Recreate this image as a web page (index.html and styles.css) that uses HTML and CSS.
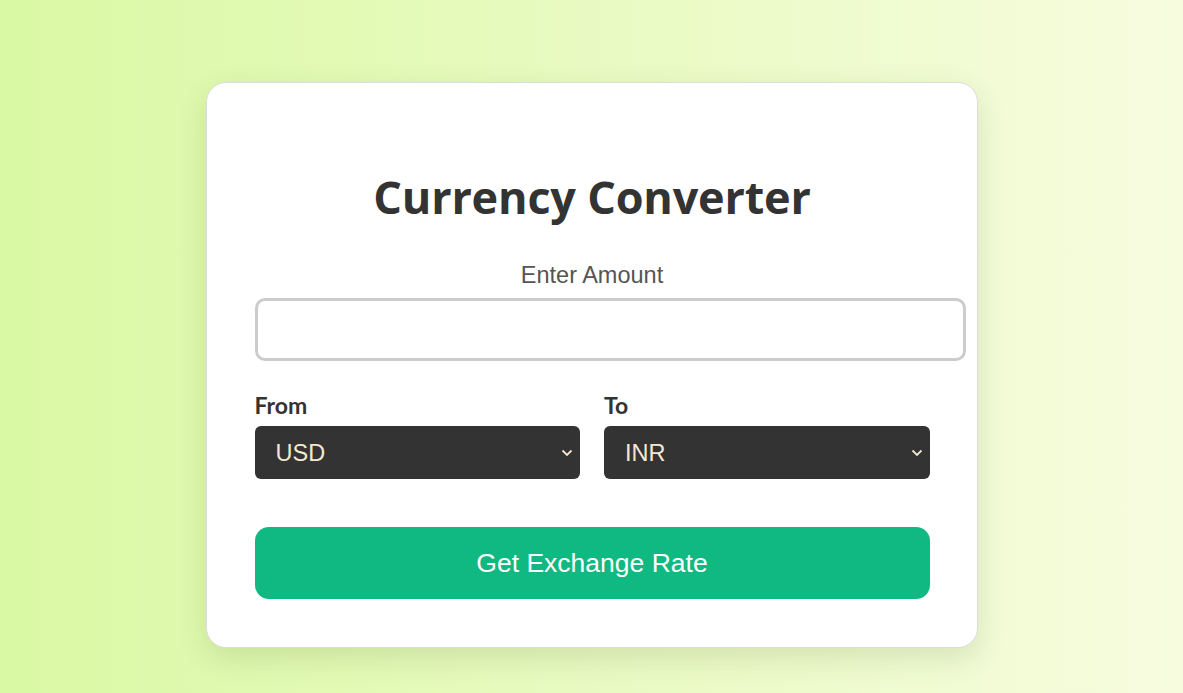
FILE: index.html
```html
<!DOCTYPE html>
<html lang="en">
<head>
<meta charset="utf-8">
<title>Currency Converter</title>
<link rel="stylesheet" href="styles.css">
</head>
<body>
  <main class="card">
    <h1 class="title">Currency Converter</h1>
    <label class="amount-label" for="amount">Enter Amount</label>
    <input class="amount-input" id="amount" type="text">
    <div class="pair">
      <div class="field">
        <label class="field-label" for="from">From</label>
        <div class="select-wrap">
          <select class="currency" id="from">
            <option>USD</option>
          </select>
          <svg class="chev" width="12" height="8" viewBox="0 0 12 8"><path d="M1.5 1.5 L6 6 L10.5 1.5" fill="none" stroke="#f3e6cc" stroke-width="1.8"/></svg>
        </div>
      </div>
      <div class="field">
        <label class="field-label" for="to">To</label>
        <div class="select-wrap">
          <select class="currency" id="to">
            <option>INR</option>
          </select>
          <svg class="chev" width="12" height="8" viewBox="0 0 12 8"><path d="M1.5 1.5 L6 6 L10.5 1.5" fill="none" stroke="#f3e6cc" stroke-width="1.8"/></svg>
        </div>
      </div>
    </div>
    <button class="convert" type="button">Get Exchange Rate</button>
  </main>
</body>
</html>
```

FILE: styles.css
```css
* { box-sizing: border-box; }

html, body { height: 100%; }

body {
  margin: 0;
  padding-top: 82px;
  background: linear-gradient(to right, #daf9a4, #f7fcdf);
  font-family: "Liberation Sans", Arial, sans-serif;
}

.card {
  width: 772px;
  margin: 0 auto;
  background: #fff;
  border: 1px solid #dcdcdc;
  border-radius: 20px;
  padding: 47px 47px 48px 48px;
  box-shadow: 0 10px 30px rgba(60, 80, 20, 0.14);
  display: flex;
  flex-direction: column;
}

.title {
  margin: 38px 0 0;
  font-family: "Open Sans", "Noto Sans", sans-serif;
  font-weight: 700;
  font-size: 45px;
  line-height: 58px;
  color: #333;
  text-align: center;
  letter-spacing: -0.2px;
}

.amount-label {
  margin-top: 35px;
  font-size: 23.5px;
  line-height: 28px;
  color: #555;
  text-align: center;
}

.amount-input {
  box-sizing: content-box;
  width: 100%;
  height: 57px;
  margin: 9px 0 0;
  padding: 0 15px;
  border: 3px solid #cccccc;
  border-radius: 10px;
  font-size: 22px;
  font-family: inherit;
  outline: none;
  background: #fff;
}

.pair {
  margin-top: 30px;
  display: grid;
  grid-template-columns: 1fr 1fr;
  column-gap: 24px;
}

.field {
  display: flex;
  flex-direction: column;
}

.field-label {
  font-family: Lato, "Open Sans", sans-serif;
  font-weight: 700;
  font-size: 23px;
  line-height: 28px;
  color: #333;
}

.select-wrap {
  position: relative;
  margin-top: 7px;
}

.currency {
  -webkit-appearance: none;
  appearance: none;
  width: 100%;
  height: 53px;
  padding: 0 21px;
  border: none;
  border-radius: 6px;
  background: #333;
  color: #f5e8cf;
  font-family: "Liberation Sans", Arial, sans-serif;
  font-size: 23.5px;
  outline: none;
}

.chev {
  position: absolute;
  right: 7px;
  top: 23px;
  pointer-events: none;
}

.convert {
  margin-top: 48px;
  height: 72px;
  border: none;
  border-radius: 14px;
  background: #10b981;
  color: #fff;
  font-family: "Liberation Sans", Arial, sans-serif;
  font-size: 26.5px;
  padding-top: 1px;
  cursor: pointer;
}
```
